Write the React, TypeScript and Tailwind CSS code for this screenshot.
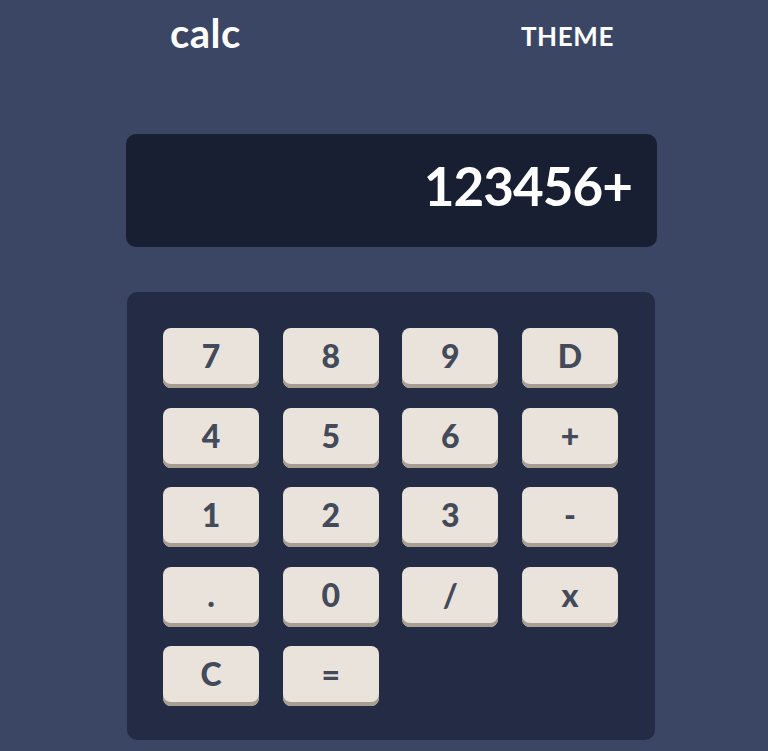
import React from "react";

const keys = ["7", "8", "9", "D", "4", "5", "6", "+", "1", "2", "3", "-", ".", "0", "/", "x", "C", "="];

export default function App() {
  return (
    <div
      className="min-h-[751px] w-full bg-[#3b4664] flex justify-center"
      style={{ fontFamily: "'Lato', 'Open Sans', sans-serif" }}
    >
      <div className="w-[531px] ml-[15px] flex flex-col">
        <header className="flex items-end justify-between pl-[44px] pr-[43px] h-[52px]">
          <h1 className="text-[40px] font-bold text-white leading-none -mb-[1px] tracking-[0.5px]">calc</h1>
          <span className="text-[26px] font-bold text-white leading-none mb-[3px] tracking-[0.6px]">THEME</span>
        </header>
        <div className="mt-[82px] h-[113px] rounded-[10px] bg-[#181f33] flex items-center justify-end pr-[25px] pb-[10px]">
          <span className="text-[53px] font-bold text-white leading-none tracking-[-1px]">123456+</span>
        </div>
        <div className="mt-[45px] ml-[1px] mr-[2px] rounded-[10px] bg-[#242c45] pt-[36px] pb-[34px] pl-[36px] pr-[36px] grid grid-cols-[repeat(4,96px)] gap-x-[23.67px] gap-y-[19.5px]">
          {keys.map((k) => (
            <button
              key={k}
              className="h-[60px] rounded-[8px] bg-[#eae3dc] shadow-[inset_0_-4px_0_#a79e91] pb-[4px] flex items-center justify-center text-[32px] font-black text-[#434a59] leading-none"
            >
              {k}
            </button>
          ))}
        </div>
      </div>
    </div>
  );
}
